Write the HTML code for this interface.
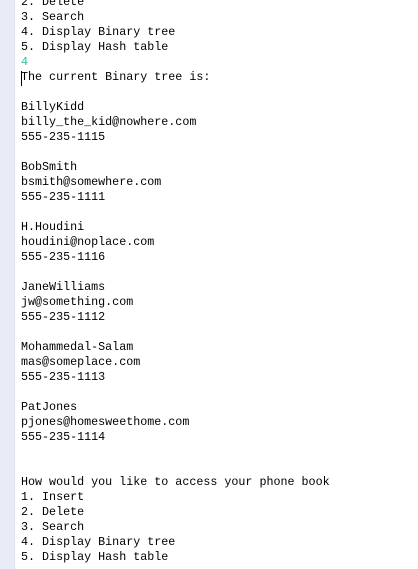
<!DOCTYPE html>
<html><head><style>
html,body{margin:0;padding:0;background:#fff;width:418px;height:569px;overflow:hidden}
.g{position:absolute;left:0;top:0;width:14px;height:569px;background:#e8ecf6;border-right:1px solid #dfe3ee}
pre{position:absolute;left:21px;top:-5px;margin:0;font-family:"Liberation Mono",monospace;font-size:11.7px;line-height:15px;color:#000}
.t{color:#2fc0a0}
.c{position:absolute;left:21px;top:71px;width:1px;height:15px;background:#000}
</style></head><body>
<div class="g"></div>
<pre>2. Delete
3. Search
4. Display Binary tree
5. Display Hash table
<span class="t">4</span>
The current Binary tree is:

BillyKidd
billy_the_kid@nowhere.com
555-235-1115

BobSmith
bsmith@somewhere.com
555-235-1111

H.Houdini
houdini@noplace.com
555-235-1116

JaneWilliams
jw@something.com
555-235-1112

Mohammedal-Salam
mas@someplace.com
555-235-1113

PatJones
pjones@homesweethome.com
555-235-1114


How would you like to access your phone book
1. Insert
2. Delete
3. Search
4. Display Binary tree
5. Display Hash table</pre>
<div class="c"></div>
</body></html>
